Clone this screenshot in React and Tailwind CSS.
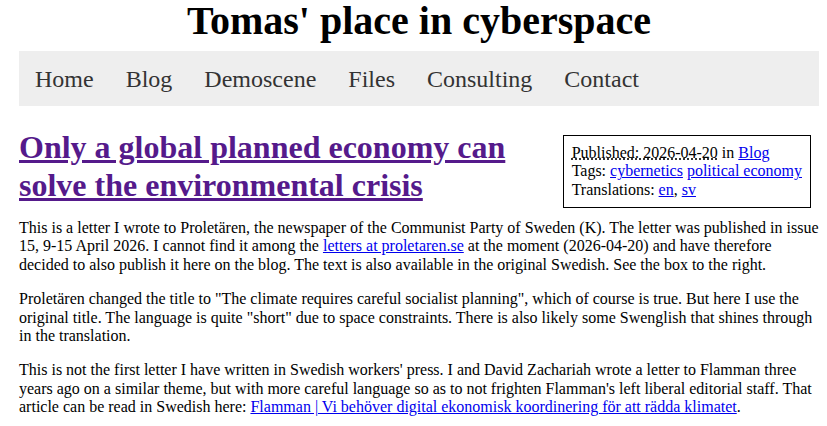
import React from 'react';

const navItems = ['Home', 'Blog', 'Demoscene', 'Files', 'Consulting', 'Contact'];

const App = () => {
  return (
    <div className="font-['Liberation_Serif','Times_New_Roman',serif] text-black bg-white min-h-[426px] text-[16px] leading-[1.15]">
      <div className="w-[800px] ml-[19px]">
        {/* header */}
        <h1 className="text-[40px] leading-[42px] font-bold text-center">Tomas' place in cyberspace</h1>

        {/* nav */}
        <nav className="mt-[9px] h-[55px] bg-[#eeeeee] flex items-center">
          {navItems.map((item) => (
            <a key={item} href="#" className="px-4 text-[24px] leading-[28px] text-[#333333]">
              {item}
            </a>
          ))}
        </nav>

        {/* article */}
        <article className="pt-[22px]">
          <aside className="float-right mt-[7px] ml-2 mr-2 border border-black p-2">
            <div>
              <span className="underline decoration-dotted">Published: 2026-04-20</span> in{' '}
              <a href="#" className="text-[#0000ee] underline">Blog</a>
            </div>
            <div>
              Tags: <a href="#" className="text-[#0000ee] underline">cybernetics</a>{' '}
              <a href="#" className="text-[#0000ee] underline">political economy</a>
            </div>
            <div>
              Translations: <a href="#" className="text-[#0000ee] underline">en</a>,{' '}
              <a href="#" className="text-[#0000ee] underline">sv</a>
            </div>
          </aside>

          <h2 className="mb-[15px] text-[32px] leading-[38px] font-bold">
            <a href="#" className="text-[#551a8b] underline">Only a global planned economy can solve the environmental crisis</a>
          </h2>

          <p className="mb-4">
            This is a letter I wrote to Proletären, the newspaper of the Communist Party of Sweden (K). The letter was
            published in issue 15, 9-15 April 2026. I cannot find it among the{' '}
            <a href="#" className="text-[#0000ee] underline">letters at proletaren.se</a> at the moment (2026-04-20) and
            have therefore decided to also publish it here on the blog. The text is also available in the original
            Swedish. See the box to the right.
          </p>

          <p className="mb-4">
            Proletären changed the title to "The climate requires careful socialist planning", which of course is true.
            But here I use the original title. The language is quite "short" due to space constraints. There is also
            likely some Swenglish that shines through in the translation.
          </p>

          <p className="mb-4">
            This is not the first letter I have written in Swedish workers' press. I and David Zachariah wrote a letter
            to Flamman three years ago on a similar theme, but with more careful language so as to not frighten
            Flamman's left liberal editorial staff. That article can be read in Swedish here:{' '}
            <a href="#" className="text-[#0000ee] underline">
              Flamman | Vi behöver digital ekonomisk koordinering för att rädda klimatet
            </a>
            .
          </p>
        </article>
      </div>
    </div>
  );
};

export default App;
